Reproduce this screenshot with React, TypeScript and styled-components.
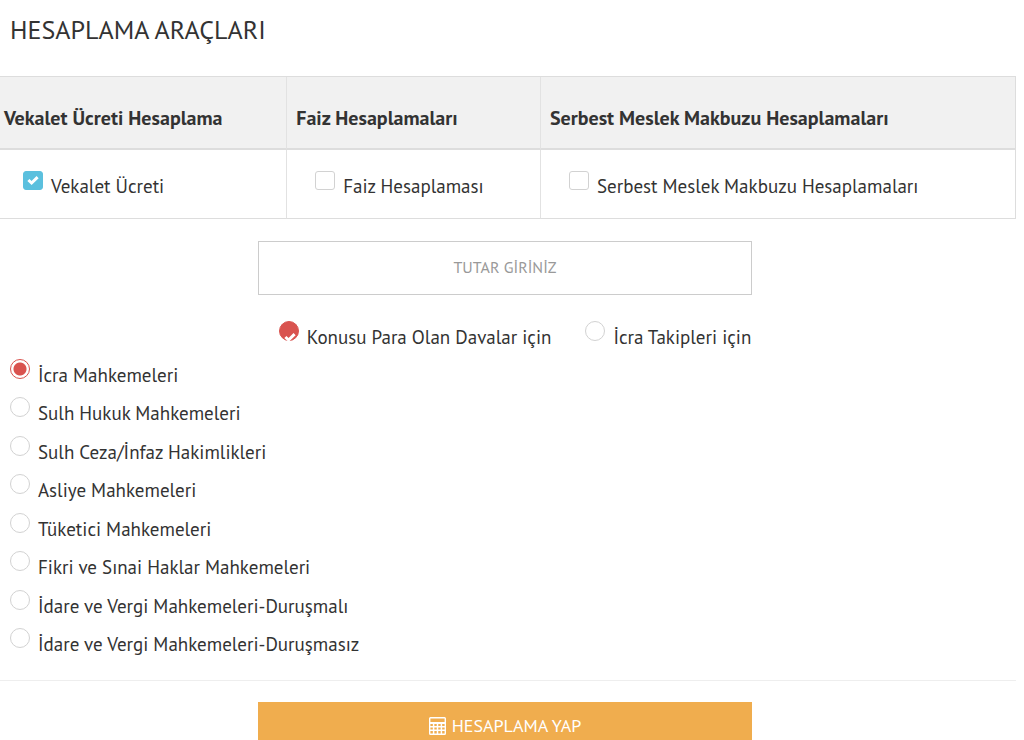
import React, { useState } from 'react';
import styled, { createGlobalStyle, css } from 'styled-components';

const GlobalStyle = createGlobalStyle`
  *, *::before, *::after { box-sizing: border-box; }
  body {
    margin: 0;
    background: #fff;
    color: #333;
    font-family: 'PT Sans', Lato, 'Noto Sans', sans-serif;
    font-size: 19px;
    line-height: 24px;
  }
`;

const Page = styled.main`
  padding: 12px 8px 0 0;
`;

const Title = styled.h1`
  margin: 0 0 28px;
  padding-left: 10px;
  font-size: 26px;
  font-weight: 400;
  line-height: 36px;
`;

const ToolTable = styled.table`
  width: 100%;
  table-layout: fixed;
  border-collapse: separate;
  border-spacing: 0;
  border-top: 1px solid #ddd;
  border-right: 1px solid #ddd;
`;

const Column = styled.col<{ $width?: string }>`
  width: ${(p) => p.$width ?? 'auto'};
`;

const cell = css`
  text-align: left;
  padding-left: 9px;
  border-left: 1px solid #e2e2e2;
  &:first-child {
    padding-left: 4px;
    border-left: 0;
  }
`;

const HeadCell = styled.th`
  ${cell}
  height: 73px;
  padding-top: 12px;
  background: #f1f1f1;
  border-bottom: 2px solid #ddd;
  font-size: 20px;
  font-weight: 700;
`;

const BodyCell = styled.td`
  ${cell}
  height: 69px;
  border-bottom: 1px solid #ddd;
`;

const Centered = styled.div`
  display: flex;
  flex-direction: column;
  align-items: center;
  padding-right: 6px;
`;

const AmountInput = styled.input`
  width: 49%;
  height: 54px;
  margin: 22px 0 26px;
  padding: 0 2px 2px;
  border: 1px solid #ccc;
  background: #fff;
  color: #333;
  font: inherit;
  font-size: 16px;
  text-align: center;
  &::placeholder {
    color: #999;
    opacity: 1;
  }
`;

const KindRow = styled.div`
  display: flex;
  gap: 34px;
  padding-left: 20px;
`;

const Option = styled.label<{ $indent?: boolean }>`
  display: flex;
  align-items: flex-start;
  gap: 8px;
  padding-left: ${(p) => (p.$indent ? '19px' : '0')};
  cursor: pointer;
`;

const OptionText = styled.span`
  padding-top: 4px;
`;

const Mark = styled.span`
  position: relative;
  display: flex;
  flex: none;
  width: 20px;
  height: 20px;
`;

const TickBox = styled.input`
  appearance: none;
  width: 20px;
  height: 19px;
  margin: 1px 0 0;
  border: 1px solid #d2d2d2;
  border-radius: 3px;
  background: #fff;
  &:checked {
    border-color: #5bc0de;
    background: #5bc0de;
  }
`;

const RadioDot = styled.input<{ $filled?: boolean }>`
  appearance: none;
  width: 20px;
  height: 20px;
  margin: 0;
  border: 1px solid #d2d2d2;
  border-radius: 50%;
  background: #fff;
  &:checked {
    border-color: #d9534f;
    background: ${(p) =>
      p.$filled ? '#d9534f' : 'radial-gradient(circle, #d9534f 6px, #fff 7px)'};
  }
`;

const Tick = styled.svg<{ $low?: boolean }>`
  position: absolute;
  inset: ${(p) => (p.$low ? '10px 3px auto auto' : '4px auto auto 4px')};
  width: 12px;
  height: 12px;
  pointer-events: none;
`;

const CourtList = styled.ul`
  display: flex;
  flex-direction: column;
  justify-content: space-between;
  min-height: 307px;
  margin: 10px 0 0;
  padding: 0 0 0 10px;
  list-style: none;
`;

const Court = styled.li`
  height: 38px;
`;

const Divider = styled.hr`
  margin: 14px 0 21px;
  border: 0;
  border-top: 1px solid #eee;
`;

const SubmitButton = styled.button`
  display: flex;
  align-items: center;
  justify-content: center;
  gap: 6px;
  width: 49%;
  height: 48px;
  border: 1px solid #f0ad4e;
  background: #f0ad4e;
  color: #fff;
  font: inherit;
  font-size: 18px;
  cursor: pointer;
`;

function TickIcon({ low }: { low?: boolean }) {
  return (
    <Tick viewBox="0 0 12 12" $low={low} aria-hidden="true">
      <path d="M1.4 6 L4.6 9 L10.6 3.2" fill="none" stroke="#fff" strokeWidth="3" />
    </Tick>
  );
}

function CalculatorIcon() {
  return (
    <svg width="17" height="18" viewBox="0 0 17 18" fill="none" stroke="#fff" aria-hidden="true">
      <rect x="0.7" y="0.7" width="15.6" height="16.6" rx="0.8" strokeWidth="1.4" />
      <path d="M1 6H16" strokeWidth="2" />
      <path d="M1 9.7H16M1 13.3H16M4.6 6V17M8.5 6V17M12.4 6V17" strokeWidth="1.5" />
    </svg>
  );
}

const tools = [
  { head: 'Vekalet Ücreti Hesaplama', label: 'Vekalet Ücreti' },
  { head: 'Faiz Hesaplamaları', label: 'Faiz Hesaplaması' },
  { head: 'Serbest Meslek Makbuzu Hesaplamaları', label: 'Serbest Meslek Makbuzu Hesaplamaları' },
];

const kinds = ['Konusu Para Olan Davalar için', 'İcra Takipleri için'];

const courts = [
  'İcra Mahkemeleri',
  'Sulh Hukuk Mahkemeleri',
  'Sulh Ceza/İnfaz Hakimlikleri',
  'Asliye Mahkemeleri',
  'Tüketici Mahkemeleri',
  'Fikri ve Sınai Haklar Mahkemeleri',
  'İdare ve Vergi Mahkemeleri-Duruşmalı',
  'İdare ve Vergi Mahkemeleri-Duruşmasız',
];

export default function App() {
  const [tool, setTool] = useState(0);
  const [kind, setKind] = useState(0);
  const [court, setCourt] = useState(0);

  return (
    <Page lang="tr">
      <GlobalStyle />
      <Title>HESAPLAMA ARAÇLARI</Title>
      <ToolTable>
        <colgroup>
          <Column $width="28.2%" />
          <Column $width="25%" />
          <Column />
        </colgroup>
        <thead>
          <tr>
            {tools.map((t) => (
              <HeadCell key={t.head} scope="col">{t.head}</HeadCell>
            ))}
          </tr>
        </thead>
        <tbody>
          <tr>
            {tools.map((t, i) => (
              <BodyCell key={t.label}>
                <Option $indent>
                  <Mark>
                    <TickBox type="checkbox" checked={tool === i} onChange={() => setTool(i)} />
                    {tool === i && <TickIcon />}
                  </Mark>
                  <OptionText>{t.label}</OptionText>
                </Option>
              </BodyCell>
            ))}
          </tr>
        </tbody>
      </ToolTable>
      <Centered>
        <AmountInput type="text" aria-label="Tutar" placeholder="TUTAR GİRİNİZ" />
        <KindRow>
          {kinds.map((k, i) => (
            <Option key={k}>
              <Mark>
                <RadioDot type="radio" name="kind" $filled checked={kind === i} onChange={() => setKind(i)} />
                {kind === i && <TickIcon low />}
              </Mark>
              <OptionText>{k}</OptionText>
            </Option>
          ))}
        </KindRow>
      </Centered>
      <CourtList>
        {courts.map((c, i) => (
          <Court key={c}>
            <Option>
              <Mark>
                <RadioDot type="radio" name="court" checked={court === i} onChange={() => setCourt(i)} />
              </Mark>
              <OptionText>{c}</OptionText>
            </Option>
          </Court>
        ))}
      </CourtList>
      <Divider />
      <Centered>
        <SubmitButton type="button">
          <CalculatorIcon />
          HESAPLAMA YAP
        </SubmitButton>
      </Centered>
    </Page>
  );
}
